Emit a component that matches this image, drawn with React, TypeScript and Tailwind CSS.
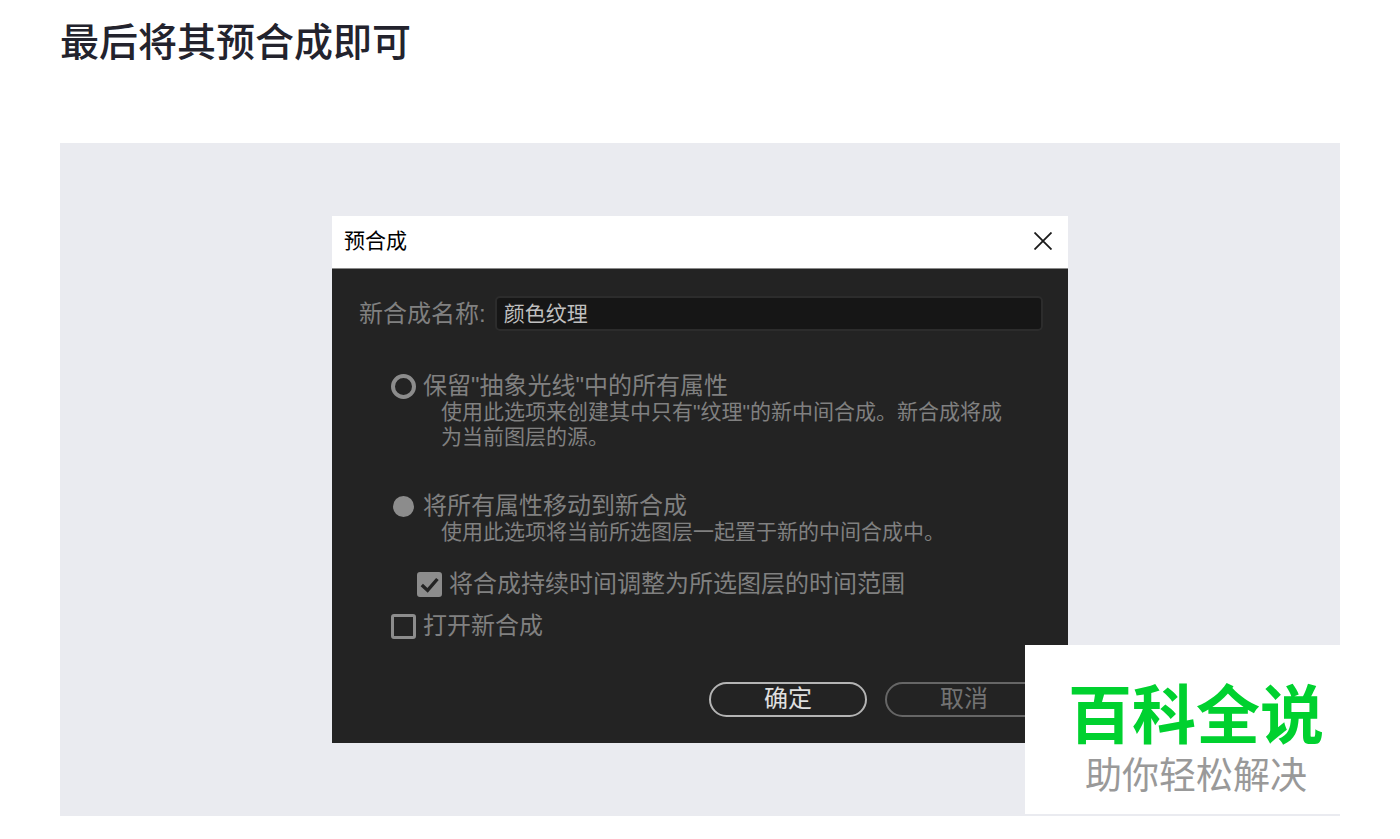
import React from "react";

interface OptionProps {
  id: string;
  label: string;
  description: string;
  defaultChecked?: boolean;
}

const RadioOption: React.FC<OptionProps> = ({ id, label, description, defaultChecked }) => {
  return (
    <div>
      <div className="flex items-center gap-[7px]">
        <input
          type="radio"
          name="mode"
          id={id}
          defaultChecked={defaultChecked}
          aria-describedby={`${id}-text`}
          className="size-[25px] shrink-0 appearance-none rounded-full border-[4px] border-[#8c8c8c] checked:border-[2px] checked:border-transparent checked:bg-[#8c8c8c] checked:bg-clip-padding"
        />
        <label htmlFor={id} className="text-2xl leading-[26px]">
          {label}
        </label>
      </div>
      <p id={`${id}-text`} className="pr-6 pl-[50px] text-[21px] leading-[25px]">
        {description}
      </p>
    </div>
  );
};

interface CheckOptionProps {
  id: string;
  label: string;
  defaultChecked?: boolean;
}

const CheckOption: React.FC<CheckOptionProps> = ({ id, label, defaultChecked }) => {
  return (
    <div className="flex items-center gap-[7px]">
      <span className="grid shrink-0">
        <input
          type="checkbox"
          id={id}
          defaultChecked={defaultChecked}
          className="peer col-start-1 row-start-1 size-[25px] appearance-none rounded-[3px] border-[3px] border-[#8c8c8c] checked:bg-[#8c8c8c]"
        />
        <svg
          viewBox="0 0 25 25"
          fill="none"
          stroke="#232323"
          strokeWidth="3.4"
          className="pointer-events-none invisible col-start-1 row-start-1 size-[25px] peer-checked:visible"
        >
          <path d="M4.8 13 10.6 18.4 20.4 7" />
        </svg>
      </span>
      <label htmlFor={id} className="text-2xl leading-[26px]">
        {label}
      </label>
    </div>
  );
};

const PrecomposeDialog = () => {
  return (
    <form
      className="w-full max-w-[736px] bg-[#232323] text-[#808080]"
      onSubmit={(e) => e.preventDefault()}
    >
      <header className="flex h-[53px] items-center justify-between border-b border-[#8a8a8a] bg-white px-3 pb-0.5 text-black">
        <h2 className="text-[21px]">预合成</h2>
        <button type="button" aria-label="关闭" className="p-1">
          <svg viewBox="0 0 18 18" stroke="#1a1a1a" strokeWidth="1.8" className="size-[18px]">
            <path d="M0.5 0.5 17.5 17.5M17.5 0.5 0.5 17.5" />
          </svg>
        </button>
      </header>

      <div className="pt-[27px] pr-[25px] pb-[26px] pl-[27px]">
        <div className="flex items-center gap-[9px]">
          <label htmlFor="comp-name" className="text-2xl leading-[26px]">
            新合成名称:
          </label>
          <input
            id="comp-name"
            type="text"
            defaultValue="颜色纹理"
            className="h-[35px] min-w-0 flex-1 rounded-[5px] border-2 border-[#2c2c2c] bg-[#161616] px-[7px] pb-1 text-[21px] text-[#c0c0c0]"
          />
        </div>

        <div className="mt-[42px] pl-8">
          <RadioOption
            id="keep"
            label={'保留"抽象光线"中的所有属性'}
            description={'使用此选项来创建其中只有"纹理"的新中间合成。新合成将成为当前图层的源。'}
          />
          <div className="mt-11">
            <RadioOption
              id="move"
              label="将所有属性移动到新合成"
              description="使用此选项将当前所选图层一起置于新的中间合成中。"
              defaultChecked
            />
          </div>
          <div className="mt-[27px] pl-[26px]">
            <CheckOption id="duration" label="将合成持续时间调整为所选图层的时间范围" defaultChecked />
          </div>
          <div className="mt-4">
            <CheckOption id="open" label="打开新合成" />
          </div>
        </div>

        <div className="mt-[43px] flex justify-end gap-[18px]">
          <button
            type="submit"
            className="h-[35px] w-[158px] rounded-full border-2 border-[#b4b4b4] pb-0.5 text-2xl leading-[26px] text-[#e0e0e0]"
          >
            确定
          </button>
          <button
            type="button"
            className="h-[35px] w-[158px] rounded-full border-2 border-[#666666] pb-0.5 text-2xl leading-[26px] text-[#737373]"
          >
            取消
          </button>
        </div>
      </div>
    </form>
  );
};

const App = () => {
  return (
    <main className="bg-white px-[60px] pt-4 pb-6 font-['Liberation_Sans','Noto_Sans_CJK_SC',sans-serif]">
      <h1 className="text-[39px] leading-[54px] font-medium text-[#23232d]">最后将其预合成即可</h1>

      <section className="relative mt-[73px] flex justify-center bg-[#eaebf0] py-[73px]">
        <PrecomposeDialog />
        {/* site badge over the corner */}
        <aside className="absolute right-0 bottom-[2px] h-[169px] w-[315px] bg-white pt-[34px] pl-[27px] text-center">
          <p className="text-[64px] leading-[74px] font-bold text-[#00d12f]">百科全说</p>
          <p className="text-[37px] leading-[48px] text-[#999999]">助你轻松解决</p>
        </aside>
      </section>
    </main>
  );
};

export default App;
